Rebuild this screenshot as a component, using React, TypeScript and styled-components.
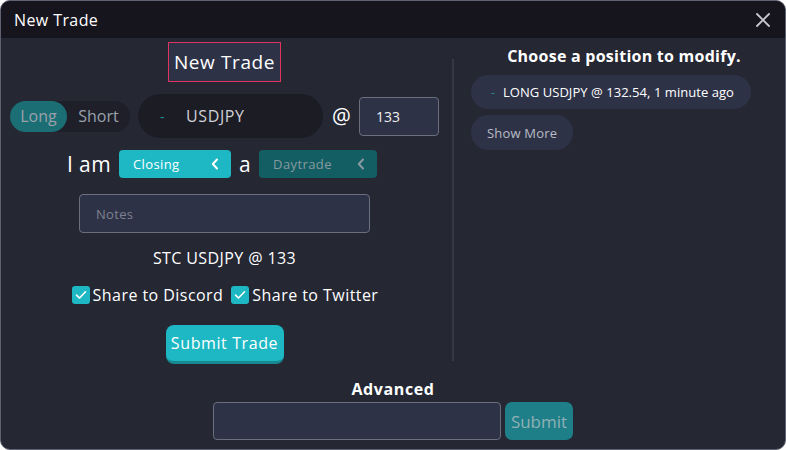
import React from "react";
import styled, { createGlobalStyle } from "styled-components";

const Global = createGlobalStyle`
  html, body { margin: 0; padding: 0; background: #ffffff; }
  body { font-family: "Open Sans", "Noto Sans", sans-serif; }
  * { box-sizing: border-box; }
`;

const Window = styled.div`
  width: 786px;
  height: 450px;
  background: #252733;
  border: 1px solid #5e6170;
  border-radius: 10px;
  overflow: hidden;
  display: flex;
  flex-direction: column;
  color: #ffffff;
`;

const Header = styled.div`
  height: 37px;
  flex: 0 0 37px;
  background: #16151d;
  display: flex;
  align-items: center;
  justify-content: space-between;
  padding: 0 12px 0 13px;
  font-size: 16px;
  letter-spacing: 0.4px;
`;

const CloseBtn = styled.div`
  width: 20px;
  height: 20px;
  display: flex;
  align-items: center;
  justify-content: center;
`;

const Columns = styled.div`
  display: grid;
  grid-template-columns: 451px 2px 1fr;
  padding-top: 4px;
`;

const Left = styled.div`
  display: flex;
  flex-direction: column;
  align-items: center;
  padding-right: 4px;
`;

const Divider = styled.div`
  width: 2px;
  background: #363846;
  margin-top: 17px;
  height: 302px;
`;

const Right = styled.div`
  display: flex;
  flex-direction: column;
  padding: 4px 0 0 17px;
`;

const TitleBox = styled.div`
  width: 113px;
  height: 40px;
  border: 1px solid #e0335f;
  background: #2e3247;
  font-size: 19px;
  letter-spacing: 0.6px;
  display: flex;
  align-items: center;
  justify-content: center;
`;

const Row = styled.div`
  display: flex;
  align-items: center;
  width: 100%;
`;

const TradeRow = styled(Row)`
  margin-top: 12px;
  padding-left: 9px;
  height: 44px;
`;

const Toggle = styled.div`
  display: flex;
  height: 31px;
  width: 120px;
  border-radius: 16px;
  background: #1e1f29;
`;

const ToggleOpt = styled.div<{ $active?: boolean }>`
  height: 31px;
  width: ${(p) => (p.$active ? "57px" : "63px")};
  border-radius: 16px;
  background: ${(p) => (p.$active ? "#1a6e74" : "transparent")};
  color: #9aa1ab;
  font-size: 16px;
  display: flex;
  align-items: center;
  justify-content: center;
`;

const SymbolPill = styled.div`
  margin-left: 8px;
  width: 185px;
  height: 44px;
  border-radius: 22px;
  background: #1c1c25;
  display: flex;
  align-items: center;
  padding-left: 22px;
  color: #d0d0d6;
  font-size: 16px;
  letter-spacing: 0.6px;
`;

const Dash = styled.span<{ $size?: number }>`
  color: #1f8a92;
  font-size: ${(p) => p.$size ?? 14}px;
  margin-right: ${(p) => (p.$size ? 8 : 21)}px;
`;

const At = styled.div`
  font-size: 21px;
  margin-left: 9px;
  width: 27px;
`;

const PriceInput = styled.div`
  width: 80px;
  height: 39px;
  background: #2e3247;
  border: 1px solid #6b6e7c;
  border-radius: 4px;
  font-size: 14px;
  display: flex;
  align-items: center;
  padding-left: 16px;
  color: #f0f0f0;
`;

const IamRow = styled(Row)`
  justify-content: center;
  margin-top: 12px;
  padding-right: 4px;
  gap: 7px;
`;

const Word = styled.span`
  font-size: 21px;
  line-height: 28px;
  letter-spacing: 0.4px;
`;

const Select = styled.div<{ $on?: boolean; $w: number }>`
  width: ${(p) => p.$w}px;
  height: 28px;
  border-radius: 4px;
  background: ${(p) => (p.$on ? "#1db8c4" : "#135e63")};
  color: ${(p) => (p.$on ? "#ffffff" : "#889aa0")};
  font-size: 13px;
  letter-spacing: 0.4px;
  display: flex;
  align-items: center;
  justify-content: space-between;
  padding: 0 12px 0 14px;
  margin: 0 1px;
`;

const Notes = styled.div`
  margin-top: 16px;
  width: 291px;
  height: 39px;
  background: #2e3247;
  border: 1px solid #6b6e7c;
  border-radius: 4px;
  font-size: 13px;
  letter-spacing: 0.3px;
  color: #7d8190;
  display: flex;
  align-items: center;
  padding-left: 16px;
`;

const Summary = styled.div`
  margin-top: 14px;
  font-size: 16px;
  letter-spacing: 0.4px;
  line-height: 22px;
`;

const ShareRow = styled(Row)`
  justify-content: center;
  margin-top: 15px;
  gap: 8px;
  padding-left: 1px;
`;

const Check = styled.label`
  display: flex;
  align-items: center;
  gap: 3px;
  font-size: 16px;
  letter-spacing: 0.45px;
`;

const Box = styled.span`
  width: 18px;
  height: 18px;
  border-radius: 3px;
  background: #1db8c4;
  display: flex;
  align-items: center;
  justify-content: center;
`;

const SubmitTrade = styled.div`
  margin-top: 19px;
  width: 118px;
  height: 39px;
  border-radius: 8px;
  background: #1db8c4;
  border-bottom: 3px solid #168991;
  font-size: 16px;
  letter-spacing: 0.6px;
  display: flex;
  align-items: center;
  justify-content: center;
`;

const Heading = styled.div`
  font-weight: 700;
  font-size: 16px;
  text-align: center;
  line-height: 20px;
`;

const RightHeading = styled(Heading)`
  margin-right: 8px;
  letter-spacing: 0.25px;
`;

const PosPill = styled.div`
  margin-top: 9px;
  align-self: flex-start;
  height: 34px;
  border-radius: 17px;
  background: #2e3247;
  display: flex;
  align-items: center;
  padding: 0 17px 0 20px;
  font-size: 13px;
  letter-spacing: 0.05px;
`;

const MorePill = styled.div`
  margin-top: 6px;
  align-self: flex-start;
  height: 35px;
  border-radius: 17px;
  background: #2e3247;
  display: flex;
  align-items: center;
  padding: 0 16px;
  font-size: 13px;
  letter-spacing: 0.2px;
  color: #b8bcc6;
`;

const Advanced = styled.div`
  margin-top: 15px;
  display: flex;
  flex-direction: column;
  align-items: center;
`;

const AdvHeading = styled(Heading)`
  letter-spacing: 0.6px;
`;

const AdvRow = styled.div`
  display: flex;
  gap: 4px;
  margin-top: 3px;
`;

const AdvInput = styled.div`
  width: 288px;
  height: 38px;
  background: #2e3247;
  border: 1px solid #6b6e7c;
  border-radius: 4px;
`;

const AdvSubmit = styled.div`
  width: 68px;
  height: 38px;
  border-radius: 7px;
  background: #1f7f88;
  color: #8fb0b6;
  font-size: 17px;
  display: flex;
  align-items: center;
  justify-content: center;
`;

const Chevron = ({ color }: { color: string }) => (
  <svg width="8" height="12" viewBox="0 0 8 12">
    <path d="M6 1.5 L1.8 6 L6 10.5" fill="none" stroke={color} strokeWidth="2" strokeLinecap="round" strokeLinejoin="round" />
  </svg>
);

const Tick = () => (
  <svg width="12" height="10" viewBox="0 0 12 10">
    <path d="M1.5 5.2 L4.5 8 L10.5 1.8" fill="none" stroke="#ffffff" strokeWidth="1.6" strokeLinecap="round" strokeLinejoin="round" />
  </svg>
);

export default function App() {
  return (
    <>
      <Global />
      <Window>
        <Header>
          <span>New Trade</span>
          <CloseBtn>
            <svg width="14" height="14" viewBox="0 0 14 14">
              <path d="M1 1 L13 13 M13 1 L1 13" stroke="#c8c8ce" strokeWidth="1.8" strokeLinecap="round" />
            </svg>
          </CloseBtn>
        </Header>
        <Columns>
          <Left>
            <TitleBox>New Trade</TitleBox>
            <TradeRow>
              <Toggle>
                <ToggleOpt $active>Long</ToggleOpt>
                <ToggleOpt>Short</ToggleOpt>
              </Toggle>
              <SymbolPill>
                <Dash>-</Dash>USDJPY
              </SymbolPill>
              <At>@</At>
              <PriceInput>133</PriceInput>
            </TradeRow>
            <IamRow>
              <Word>I am</Word>
              <Select $on $w={112}>
                <span>Closing</span>
                <Chevron color="#ffffff" />
              </Select>
              <Word>a</Word>
              <Select $w={118}>
                <span>Daytrade</span>
                <Chevron color="#889aa0" />
              </Select>
            </IamRow>
            <Notes>Notes</Notes>
            <Summary>STC USDJPY @ 133</Summary>
            <ShareRow>
              <Check>
                <Box><Tick /></Box>Share to Discord
              </Check>
              <Check>
                <Box><Tick /></Box>Share to Twitter
              </Check>
            </ShareRow>
            <SubmitTrade>Submit Trade</SubmitTrade>
          </Left>
          <Divider />
          <Right>
            <RightHeading>Choose a position to modify.</RightHeading>
            <PosPill>
              <Dash $size={12}>-</Dash>LONG USDJPY @ 132.54, 1 minute ago
            </PosPill>
            <MorePill>Show More</MorePill>
          </Right>
        </Columns>
        <Advanced>
          <AdvHeading>Advanced</AdvHeading>
          <AdvRow>
            <AdvInput />
            <AdvSubmit>Submit</AdvSubmit>
          </AdvRow>
        </Advanced>
      </Window>
    </>
  );
}
